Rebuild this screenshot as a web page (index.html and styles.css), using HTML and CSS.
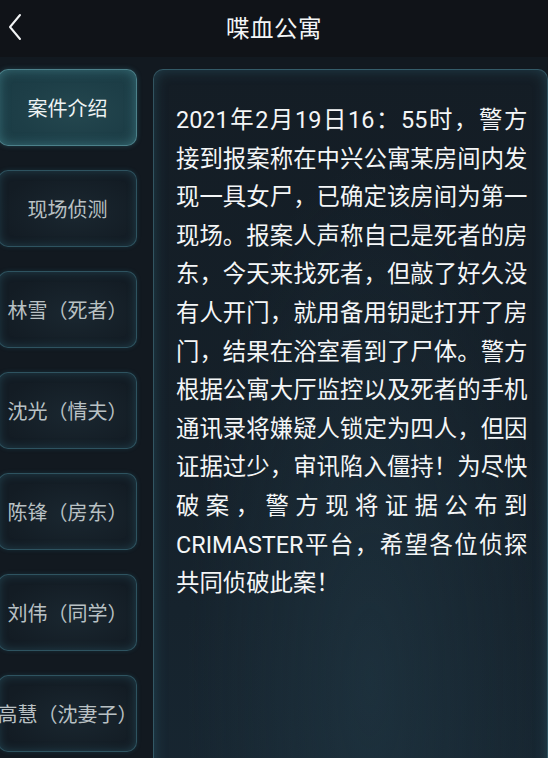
FILE: index.html
```html
<!DOCTYPE html>
<html lang="zh-CN">
<head>
<meta charset="utf-8">
<title>喋血公寓</title>
<link rel="stylesheet" href="styles.css">
</head>
<body>
<header class="topbar">
  <button class="back" aria-label="返回">
    <svg viewBox="0 0 16 28" width="16" height="28"><path d="M13 2 L3 14 L13 26" fill="none" stroke="#f2f4f5" stroke-width="2" stroke-linecap="round" stroke-linejoin="round"/></svg>
  </button>
  <h1 class="title">喋血公寓</h1>
</header>
<main class="main">
  <nav class="tabs">
    <div class="tab active">案件介绍</div>
    <div class="tab">现场侦测</div>
    <div class="tab">林雪（死者）</div>
    <div class="tab">沈光（情夫）</div>
    <div class="tab">陈锋（房东）</div>
    <div class="tab">刘伟（同学）</div>
    <div class="tab">高慧（沈妻子）</div>
  </nav>
  <section class="panel">
    <p class="story">2021年2月19日16：55时，警方接到报案称在中兴公寓某房间内发现一具女尸，已确定该房间为第一现场。报案人声称自己是死者的房东，今天来找死者，但敲了好久没有人开门，就用备用钥匙打开了房门，结果在浴室看到了尸体。警方根据公寓大厅监控以及死者的手机通讯录将嫌疑人锁定为四人，但因证据过少，审讯陷入僵持！为尽快破案，警方现将证据公布到CRIMASTER平台，希望各位侦探共同侦破此案！</p>
  </section>
</main>
</body>
</html>
```

FILE: styles.css
```css
html, body {
  margin: 0;
  padding: 0;
}
body {
  width: 548px;
  height: 758px;
  overflow: hidden;
  background: #121920;
  font-family: Roboto, "Noto Sans CJK SC", sans-serif;
  color: #f0f3f4;
}
.topbar {
  height: 57px;
  background: #101318;
  display: flex;
  align-items: center;
  justify-content: center;
  position: relative;
}
.back {
  position: absolute;
  left: 5px;
  top: 12px;
  width: 20px;
  height: 30px;
  padding: 0;
  border: 0;
  background: none;
  display: flex;
  align-items: center;
  justify-content: center;
}
.title {
  margin: 0 0 4px;
  font-size: 23.5px;
  font-weight: 400;
  color: #f4f6f7;
  letter-spacing: 0.5px;
}
.main {
  display: flex;
  gap: 16px;
  padding-top: 12px;
}
.tabs {
  flex: 0 0 139px;
  min-width: 0;
  margin-left: -2px;
  display: flex;
  flex-direction: column;
  gap: 24px;
}
.tab {
  height: 77px;
  min-width: 0;
  box-sizing: border-box;
  border-radius: 10px;
  border: 1px solid rgba(70, 130, 145, 0.55);
  background: radial-gradient(ellipse at 55% 55%, #1a2730 0%, #131c24 70%);
  box-shadow: inset 0 0 10px rgba(60, 130, 150, 0.35), 0 0 4px rgba(40, 110, 130, 0.25);
  display: flex;
  align-items: center;
  justify-content: center;
  white-space: nowrap;
  font-size: 20px;
  color: #b9c1c4;
}
.tab.active {
  background: radial-gradient(ellipse at 55% 55%, #24474f 0%, #1d3e47 55%, #1a3a43 100%);
  border-color: rgba(110, 175, 185, 0.6);
  box-shadow: inset 0 0 12px rgba(90, 170, 180, 0.45), 0 0 5px rgba(60, 140, 155, 0.35);
  color: #eef3f4;
}
.panel {
  flex: 1;
  min-width: 0;
  height: 720px;
  box-sizing: border-box;
  border-radius: 10px 10px 0 0;
  border: 1px solid rgba(80, 140, 155, 0.5);
  border-bottom: 0;
  background:
    radial-gradient(ellipse at 55% 85%, rgba(40, 70, 85, 0.35) 0%, rgba(20, 35, 45, 0) 60%),
    linear-gradient(180deg, #141d25 0%, #152029 50%, #172631 100%);
  box-shadow: inset 0 0 14px rgba(60, 130, 150, 0.35);
  padding: 31px 0 0 22px;
}
.story {
  margin: 0;
  width: 351.5px;
  font-size: 23.4px;
  line-height: 38.6px;
  text-align: justify;
  color: #f4f6f7;
  text-spacing-trim: space-all;
}
```
